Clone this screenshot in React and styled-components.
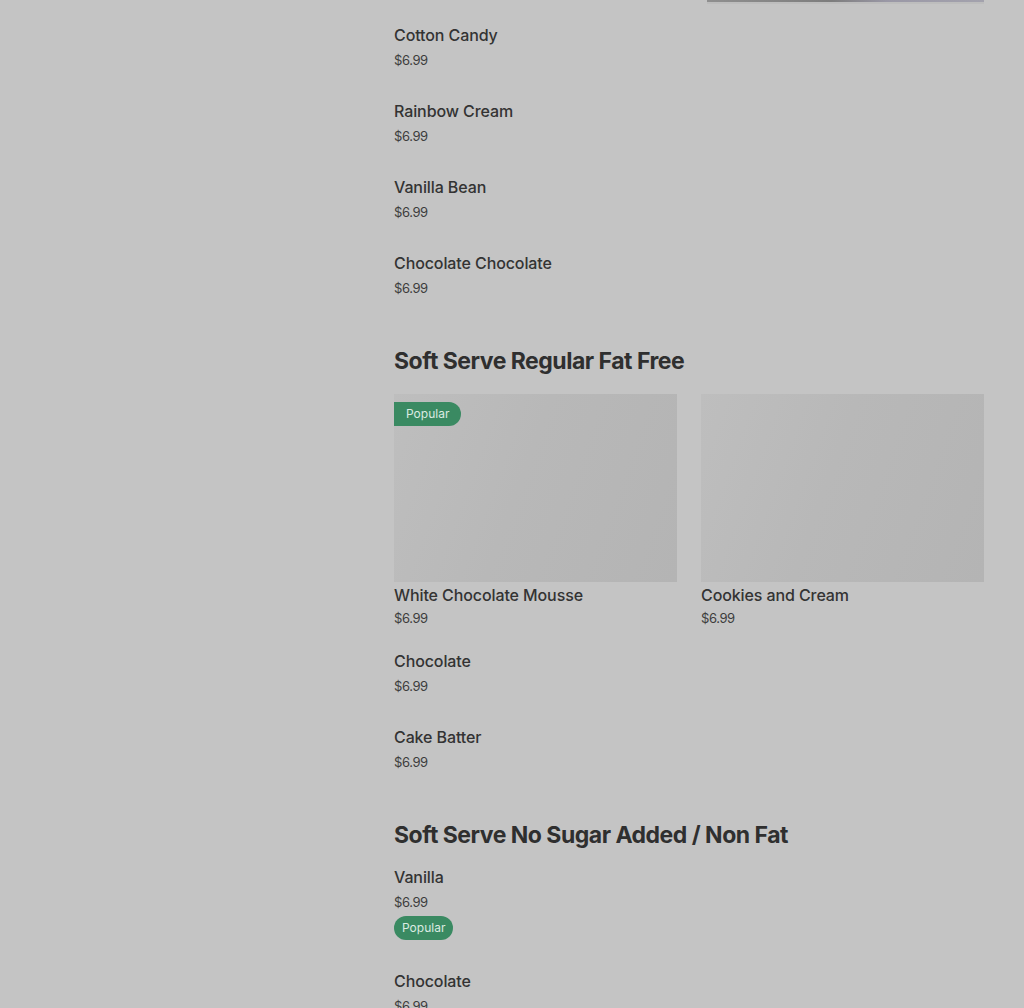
import React from "react";
import styled, { createGlobalStyle } from "styled-components";

const GlobalStyle = createGlobalStyle`
  html, body {
    margin: 0;
    padding: 0;
    background: #c4c4c4;
    font-family: Inter, "Noto Sans", sans-serif;
    color: #2f2f2f;
  }
`;

const Page = styled.main`
  width: 590px;
  padding-left: 394px;
  min-height: 1008px;
`;

const TopStrip = styled.div`
  margin-left: 313px;
  width: 277px;
  height: 2px;
  background: linear-gradient(90deg, #8f8f8f 0%, #7d7d7d 45%, #9a98a6 65%, #a3a2ad 100%);
  border-bottom: 2px solid #bdbdbd;
`;

const Section = styled.section`
  padding-top: ${(p) => p.$top || 0}px;
`;

const Heading = styled.h2`
  margin: 0 0 ${(p) => p.$gap || 14}px;
  font-size: 23px;
  line-height: 32px;
  font-weight: 700;
  letter-spacing: -0.5px;
  color: #2f2f2f;
`;

const Item = styled.div`
  padding-bottom: ${(p) => p.$pad ?? 30}px;
`;

const Name = styled.div`
  font-size: 16px;
  line-height: 24px;
  font-weight: 500;
  letter-spacing: -0.1px;
  color: #333;
`;

const Price = styled.div`
  margin-top: ${(p) => p.$gap ?? 4}px;
  font-size: 13px;
  line-height: 18px;
  letter-spacing: -0.4px;
  color: #3d3d3d;
`;

const Badge = styled.span`
  display: inline-block;
  margin-top: 5px;
  height: 24px;
  line-height: 24px;
  padding: 0 8px;
  border-radius: ${(p) => (p.$flush ? "0 12px 12px 0" : "12px")};
  background: #3a8a62;
  color: #dcebe1;
  font-size: 12px;
`;

const CardGrid = styled.div`
  display: grid;
  grid-template-columns: 1fr 1fr;
  gap: 24px;
  padding-bottom: 22px;
`;

const Card = styled.div`
  display: flex;
  flex-direction: column;
`;

const CardImage = styled.div`
  position: relative;
  height: 188px;
  background: linear-gradient(110deg, #bebebe 0%, #b8b8b8 45%, #b4b4b4 100%);
`;

const CardBadge = styled(Badge)`
  position: absolute;
  top: 8px;
  left: 0;
  margin: 0;
  padding: 0 12px;
`;

const CardName = styled(Name)`
  margin-top: 1px;
`;

const items1 = ["Cotton Candy", "Rainbow Cream", "Vanilla Bean", "Chocolate Chocolate"];
const items2 = ["Chocolate", "Cake Batter"];

const MenuItem = ({ name, popular }) => (
  <Item $pad={popular ? 29 : 30}>
    <Name>{name}</Name>
    <Price>$6.99</Price>
    {popular && <Badge>Popular</Badge>}
  </Item>
);

export default function App() {
  return (
    <>
      <GlobalStyle />
      <Page>
        <TopStrip />
        <Section $top={19}>
          {items1.map((n) => (
            <MenuItem key={n} name={n} />
          ))}
        </Section>
        <Section $top={18}>
          <Heading $gap={17}>Soft Serve Regular Fat Free</Heading>
          <CardGrid>
            <Card>
              <CardImage>
                <CardBadge $flush>Popular</CardBadge>
              </CardImage>
              <CardName>White Chocolate Mousse</CardName>
              <Price $gap={2}>$6.99</Price>
            </Card>
            <Card>
              <CardImage />
              <CardName>Cookies and Cream</CardName>
              <Price $gap={2}>$6.99</Price>
            </Card>
          </CardGrid>
          {items2.map((n) => (
            <MenuItem key={n} name={n} />
          ))}
        </Section>
        <Section $top={18}>
          <Heading $gap={14}>Soft Serve No Sugar Added / Non Fat</Heading>
          <MenuItem name="Vanilla" popular />
          <MenuItem name="Chocolate" />
        </Section>
      </Page>
    </>
  );
}
